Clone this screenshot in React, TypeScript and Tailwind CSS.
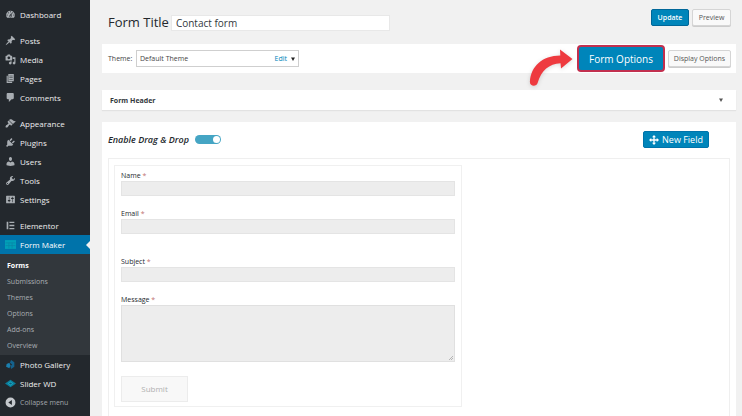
import * as React from "react";

type NavItem = {
  label: string;
  icon: React.ReactNode;
};

function Dashicon({ d }: { d: string }) {
  return (
    <svg viewBox="0 0 20 20" className="w-full h-full" fill="currentColor" fillRule="evenodd" aria-hidden="true">
      <path d={d} />
    </svg>
  );
}

const groups: NavItem[][] = [
  [
    {
      label: "Dashboard",
      icon: (
        <Dashicon d="M3.76 16h12.48c1.1-1.37 1.76-3.11 1.76-5 0-4.42-3.58-8-8-8s-8 3.58-8 8c0 1.89.66 3.63 1.76 5zM10 4c.55 0 1 .45 1 1s-.45 1-1 1-1-.45-1-1 .45-1 1-1zM6 6c.55 0 1 .45 1 1s-.45 1-1 1-1-.45-1-1 .45-1 1-1zm8 0c.55 0 1 .45 1 1s-.45 1-1 1-1-.45-1-1 .45-1 1-1zm-5.37 5.55L12 7v6c0 1.1-.9 2-2 2s-2-.9-2-2c0-.57.24-1.08.63-1.45zM4 10c.55 0 1 .45 1 1s-.45 1-1 1-1-.45-1-1 .45-1 1-1zm12 0c.55 0 1 .45 1 1s-.45 1-1 1-1-.45-1-1 .45-1 1-1zm-5 3c0-.55-.45-1-1-1s-1 .45-1 1 .45 1 1 1 1-.45 1-1z" />
      ),
    },
  ],
  [
    {
      label: "Posts",
      icon: (
        <Dashicon d="M10.44 3.02l1.82-1.82 6.36 6.35-1.83 1.82c-1.05-.68-2.48-.57-3.41.36l-.75.75c-.92.93-1.04 2.35-.35 3.41l-1.83 1.82-2.41-2.41-2.8 2.79c-.42.42-3.38 2.71-3.8 2.29s1.86-3.39 2.28-3.81l2.79-2.79L4.1 9.36l1.83-1.82c1.05.69 2.48.57 3.4-.36l.75-.75c.93-.92 1.05-2.35.36-3.41z" />
      ),
    },
    {
      label: "Media",
      icon: (
        <Dashicon d="M13 11V4c0-.55-.45-1-1-1h-1.67L9 1H5L3.67 3H2c-.55 0-1 .45-1 1v7c0 .55.45 1 1 1h10c.55 0 1-.45 1-1zM7 4.5c1.38 0 2.5 1.12 2.5 2.5S8.38 9.5 7 9.5 4.5 8.38 4.5 7 5.62 4.5 7 4.5zM14 6h5v10.5c0 1.38-1.12 2.5-2.5 2.5S14 17.88 14 16.5s1.12-2.5 2.5-2.5c.17 0 .34.02.5.05V9h-3V6zm-4 8.05V13h2v3.5c0 1.38-1.12 2.5-2.5 2.5S7 17.88 7 16.5 8.12 14 9.5 14c.17 0 .34.02.5.05z" />
      ),
    },
    { label: "Pages", icon: <Dashicon d="M6 15V2h10v13H6zm-1 1h8v2H3V5h2v11zM8 5v1h6V5H8zm0 3v1h6V8H8zm0 3v1h6v-1H8z" /> },
    {
      label: "Comments",
      icon: <Dashicon d="M5 2h9c1.1 0 2 .9 2 2v7c0 1.1-.9 2-2 2h-2l-5 5v-5H5c-1.1 0-2-.9-2-2V4c0-1.1.9-2 2-2z" />,
    },
  ],
  [
    {
      label: "Appearance",
      icon: (
        <Dashicon d="M14.48 11.06L7.41 3.99l1.5-1.5c.5-.56 2.3-.47 3.51.32 1.21.8 1.43 1.28 2.91 2.1 1.18.64 2.45 1.26 4.45.85zm-.71.71L6.7 4.7 4.93 6.47c-.39.39-.39 1.02 0 1.41l1.06 1.06c.39.39.39 1.03 0 1.42-.6.6-1.43 1.11-2.21 1.69-.35.26-.7.53-1.01.84C1.43 14.23.4 16.08 1.4 17.07c.99 1 2.84-.03 4.18-1.36.31-.31.58-.66.85-1.02.57-.78 1.08-1.61 1.69-2.21.39-.39 1.02-.39 1.41 0l1.06 1.06c.39.39 1.02.39 1.41 0z" />
      ),
    },
    {
      label: "Plugins",
      icon: (
        <Dashicon d="M13.11 4.36L9.87 7.6 8 5.73l3.24-3.24c.35-.34 1.05-.2 1.56.32.52.51.66 1.21.31 1.55zm-8 1.77l.91-1.12 9.01 9.01-1.19.84c-.71.71-2.63 1.16-3.82 1.16H6.14L4.9 17.26c-.59.59-1.54.59-2.12 0-.59-.58-.59-1.53 0-2.12l1.24-1.24v-3.88c0-1.13.4-3.19 1.09-3.89zm7.26 3.97l3.24-3.24c.34-.35 1.04-.21 1.55.31.52.51.66 1.21.31 1.55l-3.24 3.25z" />
      ),
    },
    {
      label: "Users",
      icon: (
        <Dashicon d="M10 9.25c-2.27 0-2.73-3.44-2.73-3.44C7 4.02 7.82 2 9.97 2c2.16 0 2.98 2.02 2.71 3.81 0 0-.41 3.44-2.68 3.44zm0 2.57L12.72 10c2.39 0 4.52 2.33 4.52 4.53v2.49s-3.65 1.13-7.24 1.13c-3.65 0-7.24-1.13-7.24-1.13v-2.49c0-2.25 1.94-4.48 4.47-4.48z" />
      ),
    },
    {
      label: "Tools",
      icon: (
        <Dashicon d="M16.68 9.77c-1.34 1.34-3.3 1.67-4.95.99l-5.41 6.52c-.99.99-2.59.99-3.58 0s-.99-2.59 0-3.57l6.52-5.42c-.68-1.65-.35-3.61.99-4.95 1.28-1.28 3.12-1.62 4.72-1.06l-2.89 2.89 2.82 2.82 2.86-2.87c.53 1.58.18 3.39-1.08 4.65zM3.81 16.21c.4.39 1.04.39 1.43 0 .4-.4.4-1.04 0-1.43-.39-.4-1.03-.4-1.43 0-.39.39-.39 1.03 0 1.43z" />
      ),
    },
    {
      label: "Settings",
      icon: (
        <Dashicon d="M18 16V4c0-.55-.45-1-1-1H3c-.55 0-1 .45-1 1v12c0 .55.45 1 1 1h14c.55 0 1-.45 1-1zM8 11h1c.55 0 1 .45 1 1s-.45 1-1 1H8v1.5c0 .28-.22.5-.5.5s-.5-.22-.5-.5V13H6c-.55 0-1-.45-1-1s.45-1 1-1h1V5.5c0-.28.22-.5.5-.5s.5.22.5.5V11zm5-2h-1c-.55 0-1-.45-1-1s.45-1 1-1h1V5.5c0-.28.22-.5.5-.5s.5.22.5.5V7h1c.55 0 1 .45 1 1s-.45 1-1 1h-1v5.5c0 .28-.22.5-.5.5s-.5-.22-.5-.5V9z" />
      ),
    },
  ],
];

const subItems = ["Forms", "Submissions", "Themes", "Options", "Add-ons", "Overview"];

const fields = [
  { id: "name", label: "Name", gap: "mb-3" },
  { id: "email", label: "Email", gap: "mb-[22px]" },
  { id: "subject", label: "Subject", gap: "mb-3" },
];

function NavLink({ item, active }: { item: NavItem; active?: boolean }) {
  return (
    <a
      href="#"
      className={`relative flex items-center h-[19px] pl-[5px] gap-1 text-[8px] leading-none ${
        active ? "bg-[#0073aa] text-white" : "text-[#eeeeee]"
      }`}
    >
      <span className="flex w-[11px] h-[11px] shrink-0 text-[#a8adb2]">{item.icon}</span>
      {item.label}
      {active && (
        <span className="absolute right-0 top-1/2 -translate-y-1/2 border-y-4 border-r-4 border-y-transparent border-r-[#f1f1f1]"></span>
      )}
    </a>
  );
}

function Sidebar() {
  return (
    <nav className="w-[90px] shrink-0 bg-[#23282d] pt-[5px]">
      <div className="flex flex-col gap-[7px]">
        {groups.map((group) => (
          <div key={group[0].label}>
            {group.map((item) => (
              <NavLink key={item.label} item={item} />
            ))}
          </div>
        ))}
        <div>
          <NavLink item={{ label: "Elementor", icon: <Dashicon d="M3 3h3v14H3zM8 3h9v2.6H8zM8 8.7h9v2.6H8zM8 14.4h9V17H8z" /> }} />
          <NavLink
            active
            item={{
              label: "Form Maker",
              icon: (
                <svg viewBox="0 0 20 20" className="w-full h-full" aria-hidden="true">
                  <path fill="#00a0b8" d="M0 2h20v16H0z" />
                  <path fill="none" stroke="#0b83a5" strokeWidth="1.2" d="M1 7h18M1 12h18M7 7v10M13 7v10" />
                </svg>
              ),
            }}
          />
        </div>
      </div>

      <ul className="bg-[#32373c] pt-[3px] pb-0.5 text-[7px]">
        {subItems.map((label, i) => (
          <li key={label}>
            <a
              href="#"
              className={`flex items-center h-4 pl-[7px] leading-none ${
                i === 0 ? "font-bold text-white" : "text-[#a9aeb3]"
              }`}
            >
              {label}
            </a>
          </li>
        ))}
      </ul>

      <NavLink
        item={{
          label: "Photo Gallery",
          icon: (
            <svg viewBox="0 0 20 20" className="w-full h-full" aria-hidden="true">
              <path fill="#14618c" d="M11 2l6 4v8l-6 4-1-5 3-3-4-3z" />
              <path fill="#1b7fae" d="M8 7l2 5-2 5-6-3 1-5z" />
            </svg>
          ),
        }}
      />
      <NavLink
        item={{
          label: "Slider WD",
          icon: (
            <svg viewBox="0 0 20 20" className="w-full h-full" aria-hidden="true">
              <path fill="#0b7d9b" d="M10 3l10 7-10 7L0 10z" />
              <path fill="#19a5bd" d="M10 6l5 4-5 4-5-4z" />
              <path fill="#0a5f80" d="M10 8l3 2-3 2-3-2z" />
            </svg>
          ),
        }}
      />
      <button type="button" className="flex items-center w-full h-[19px] pl-[5px] gap-1 text-[7px] leading-none text-[#a0a5aa]">
        <span className="flex w-[11px] h-[11px] text-[#c4c8cc]">
          <Dashicon d="M10 1a9 9 0 1 0 0 18 9 9 0 0 0 0-18zM12.500 5.500v9L6 10z" />
        </span>
        Collapse menu
      </button>
    </nav>
  );
}

// red pointer that highlights the Form Options button
function Arrow() {
  return (
    <svg
      viewBox="0 0 44 38"
      className="absolute right-full top-1 mr-1 w-11 h-[38px] drop-shadow-sm"
      fill="#ee3a3f"
      aria-hidden="true"
    >
      <path d="M31 0.5 L43.5 10 L32 19.500 L31.500 14.200 C20 15 12.500 21 8.600 34 C7.400 38 0.600 37.400 0.900 32.600 C2 17.500 13 6.800 31.300 6.600 Z" />
    </svg>
  );
}

const greyButton =
  "h-[17px] border border-[#d5d5d5] rounded-xs bg-[#f9f9f9] shadow-[0_1px_0_#cccccc] text-[7px] leading-none text-[#555555]";

export default function App() {
  const [title, setTitle] = React.useState("Contact form");
  const [dragDrop, setDragDrop] = React.useState(true);

  return (
    <div className="flex h-screen overflow-hidden bg-[#f1f1f1] font-['Open_Sans','Noto_Sans',sans-serif] text-[#444444]">
      <Sidebar />

      <main className="flex-1 min-w-0 pl-3 pr-1.5">
        <header className="flex items-start pt-[9px] pl-1.5 pr-[5px] h-11">
          <label htmlFor="title" className="text-[13px] leading-[27px] text-[#23282d] whitespace-nowrap">
            Form Title
          </label>
          <input
            id="title"
            value={title}
            onChange={(e) => setTitle(e.target.value)}
            className="mt-1.5 ml-0.5 w-[219px] h-4 border border-[#e8e8e8] bg-white px-1 text-[10px] leading-none text-[#32373c]"
          />
          <div className="flex gap-[3px] ml-auto">
            <button
              type="button"
              className="w-[38px] h-[17px] border border-[#006799] rounded-xs bg-[#0085ba] text-[7px] leading-none font-semibold text-white"
            >
              Update
            </button>
            <button type="button" className={`${greyButton} w-[39px]`}>
              Preview
            </button>
          </div>
        </header>

        <section className="flex items-center h-[29px] pl-1.5 pr-[5px] bg-white">
          <span className="w-7 text-[7px] leading-none">Theme:</span>
          <button
            type="button"
            className="flex items-center w-[163px] h-[17px] pl-[3px] pr-0.5 border border-[#cfcfcf] text-[7px] leading-none"
          >
            Default Theme
            <span className="ml-auto text-[#0085ba]">Edit</span>
            <svg viewBox="0 0 6 6" className="w-1.5 h-1.5 ml-[3px]" fill="#222222" aria-hidden="true">
              <path d="M1 1.500h4L3 5z" />
            </svg>
          </button>
          <div className="relative flex items-center gap-[3px] ml-auto">
            <Arrow />
            <button
              type="button"
              className="w-[88px] h-[27px] border-2 border-[#c2304f] rounded-sm bg-[#0085ba] text-[10px] leading-none text-white"
            >
              Form Options
            </button>
            <button type="button" className={`${greyButton} w-[63px]`}>
              Display Options
            </button>
          </div>
        </section>

        <button
          type="button"
          className="flex items-center justify-between w-full h-5 mt-[17px] pl-2 pr-3 bg-white shadow-[0_1px_1px_#e2e2e2] text-[7px] leading-none font-bold text-[#32373c]"
        >
          Form Header
          <svg viewBox="0 0 6 6" className="w-1.5 h-1.5" fill="#555555" aria-hidden="true">
            <path d="M1 1.500h4L3 5z" />
          </svg>
        </button>

        <section className="mt-3 pt-[9px] px-1.5 pb-6 bg-white">
          <div className="flex items-center pr-[21px]">
            <label htmlFor="drag" className="text-[9px] leading-none font-semibold italic text-[#23282d]">
              Enable Drag &amp; Drop
            </label>
            <span className="relative flex w-[26px] h-[9px] ml-1.5">
              <input
                id="drag"
                type="checkbox"
                checked={dragDrop}
                onChange={(e) => setDragDrop(e.target.checked)}
                className="peer appearance-none w-full h-full rounded-full bg-[#c4c4c4] checked:bg-[#45a5c4]"
              />
              <span className="absolute top-px left-px w-[7px] h-[7px] rounded-full bg-white pointer-events-none peer-checked:left-auto peer-checked:right-px"></span>
            </span>
            <button
              type="button"
              className="flex items-center justify-center gap-[3px] w-[66px] h-[17px] ml-auto border border-[#0073aa] rounded-xs bg-[#0085ba] text-[9px] leading-none text-white"
            >
              <svg viewBox="0 0 20 20" className="w-2.5 h-2.5" fill="currentColor" aria-hidden="true">
                <path d="M10 0l4 4.500h-2.700v4.200h4.200V6L20 10l-4.500 4v-2.700h-4.200v4.200H14L10 20l-4-4.500h2.700v-4.200H4.500V14L0 10l4.500-4v2.700h4.200V4.500H6z" />
              </svg>
              New Field
            </button>
          </div>

          <div className="mt-2.5 px-[5px] pt-1.5 pb-8 border border-[#efefef]">
            <form className="w-[57%] px-1.5 pt-1 pb-1 border border-[#f0f0f0]" onSubmit={(e) => e.preventDefault()}>
              {fields.map((field) => (
                <div key={field.id} className={field.gap}>
                  <label htmlFor={field.id} className="block text-[7px] leading-[11px] text-[#23282d]">
                    {field.label} <span className="text-[#c07070]">*</span>
                  </label>
                  <input id={field.id} className="block w-full h-[15px] border border-[#e4e4e4] bg-[#ededed] px-1 text-[7px]" />
                </div>
              ))}
              <label htmlFor="message" className="block text-[7px] leading-[11px] text-[#23282d]">
                Message <span className="text-[#c07070]">*</span>
              </label>
              <div className="relative">
                <textarea
                  id="message"
                  className="block w-full h-[57px] resize-none border border-[#e0e0e0] bg-[#ededed] px-1 text-[7px]"
                />
                <svg
                  viewBox="0 0 6 6"
                  className="absolute right-0.5 bottom-0.5 w-1 h-1"
                  stroke="#999999"
                  fill="none"
                  aria-hidden="true"
                >
                  <path d="M0 6L6 0M3 6l3-3" />
                </svg>
              </div>
              <button
                type="submit"
                className="mt-3.5 w-[67px] h-[26px] border border-[#ececec] bg-[#f8f8f8] text-[8px] leading-none text-[#b0b0b0]"
              >
                Submit
              </button>
            </form>
          </div>
        </section>
      </main>
    </div>
  );
}
